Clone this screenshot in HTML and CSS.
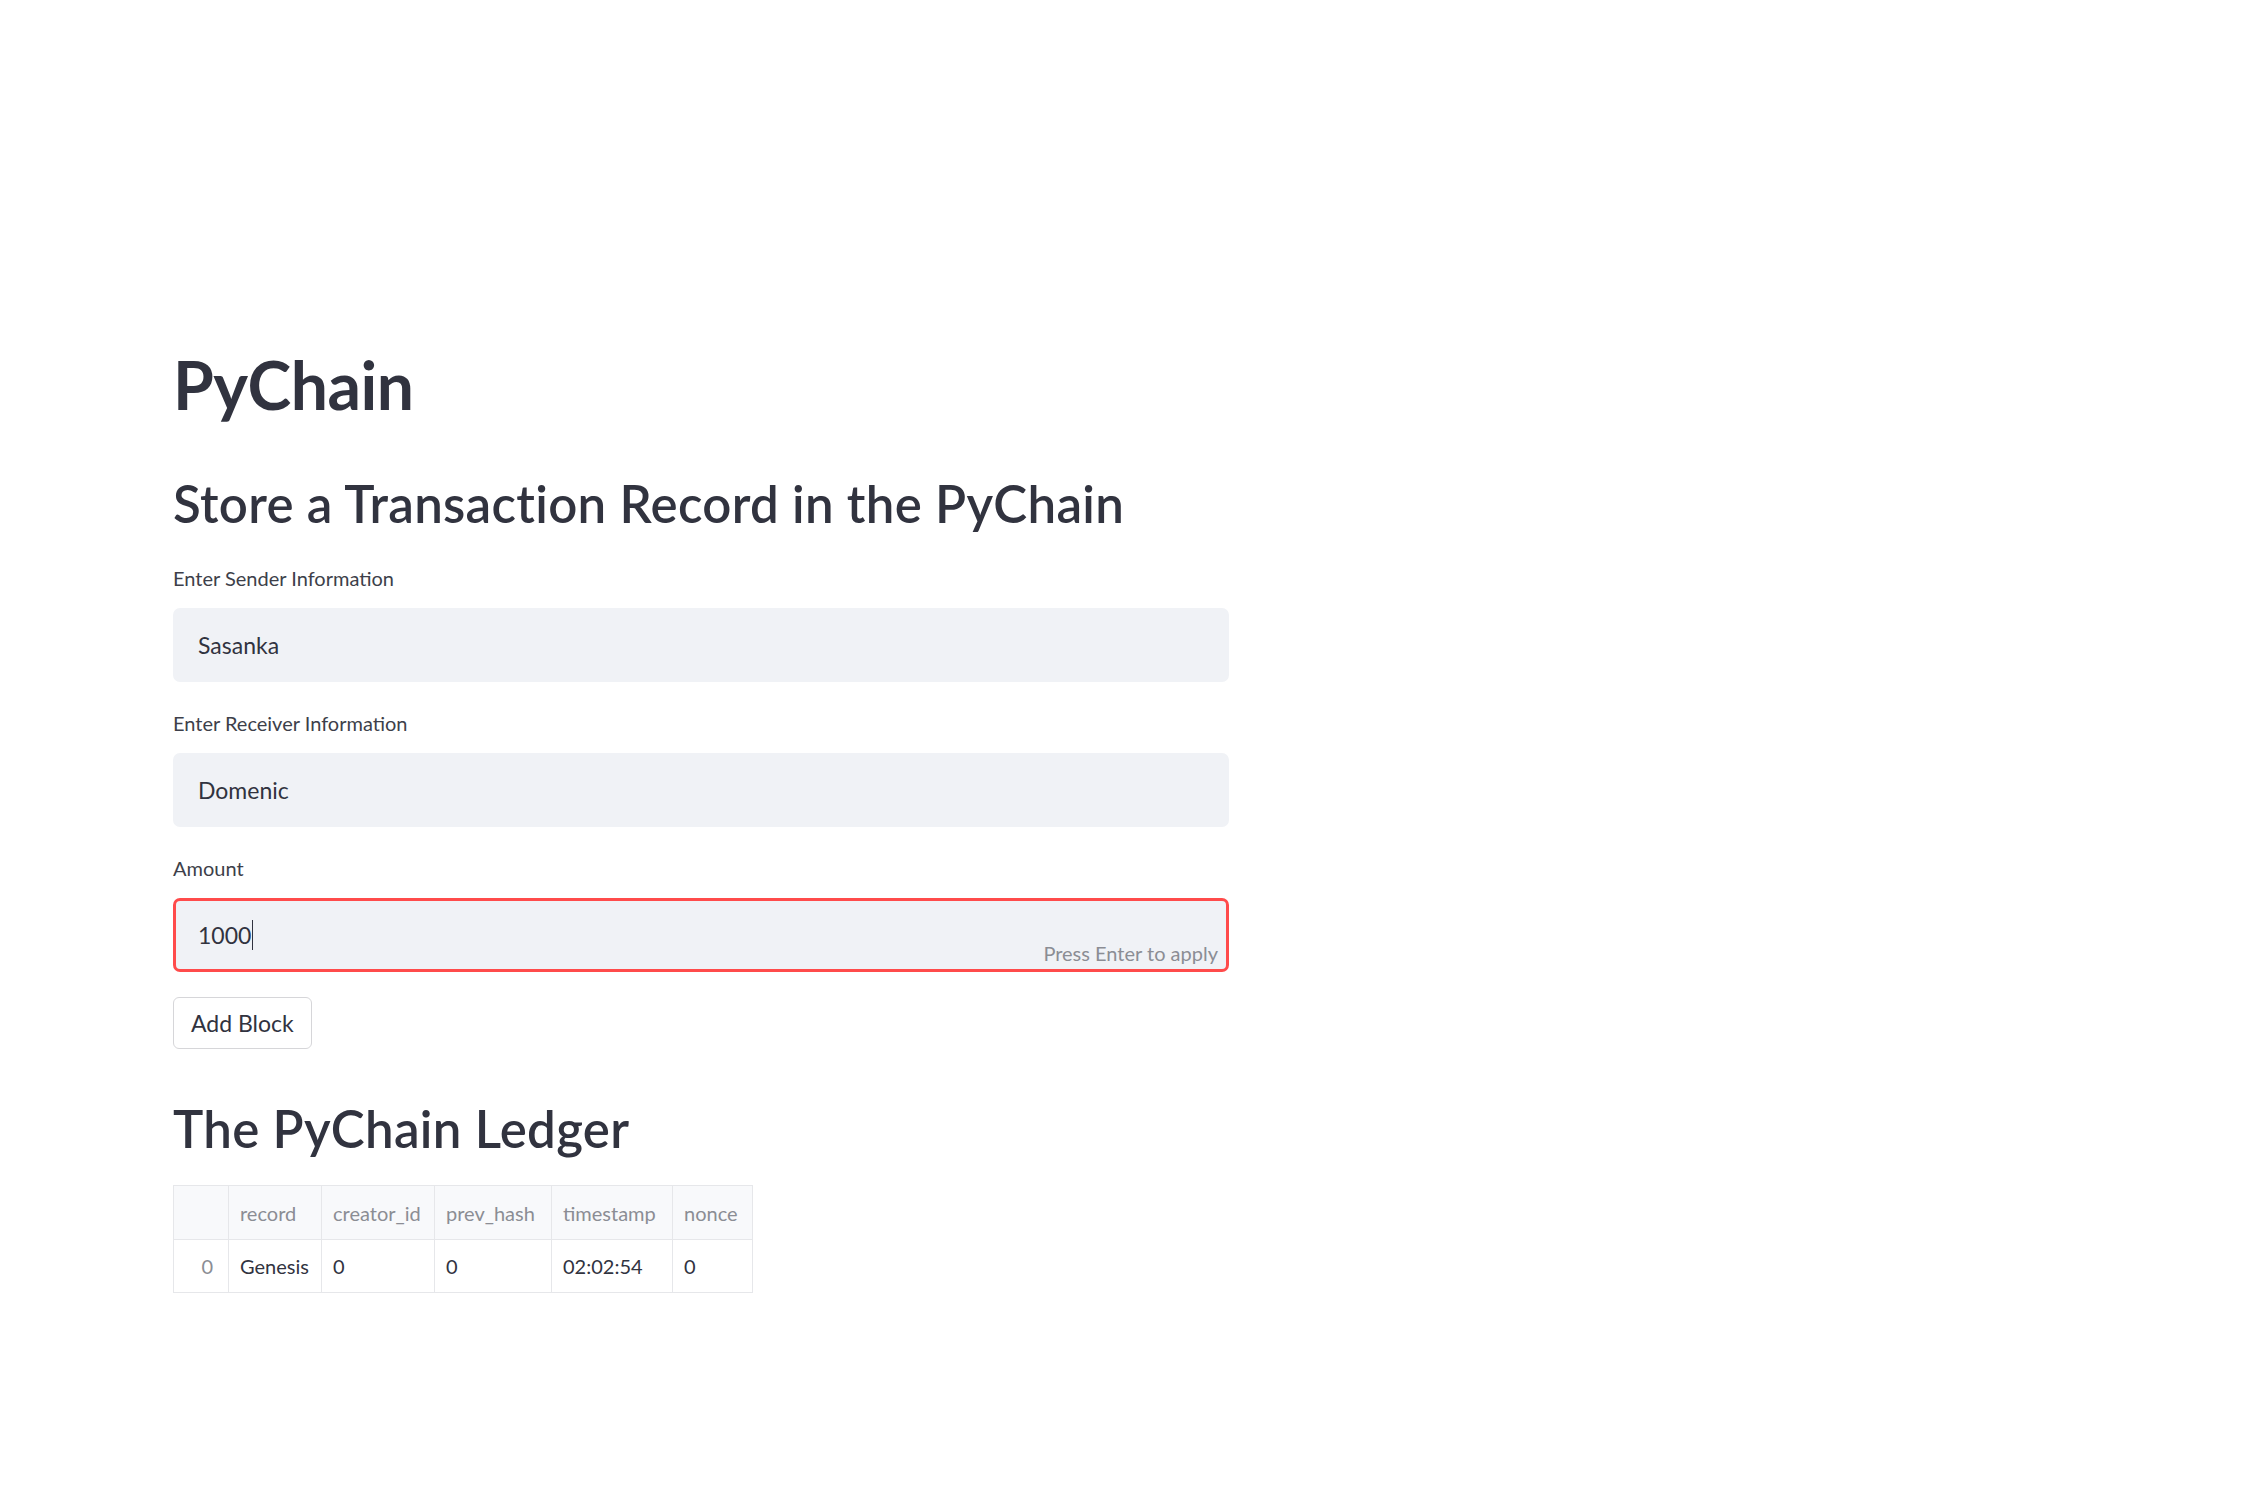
FILE: index.html
```html
<!DOCTYPE html>
<html lang="en">
<head>
<meta charset="utf-8">
<title>PyChain</title>
<link rel="stylesheet" href="styles.css">
</head>
<body>
<main class="app">
  <section class="block">
    <h1 class="title">PyChain</h1>
    <h2 class="heading heading-store">Store a Transaction Record in the PyChain</h2>

    <div class="field">
      <div class="field-label">Enter Sender Information</div>
      <div class="input"><span class="input-value">Sasanka</span></div>
    </div>

    <div class="field">
      <div class="field-label">Enter Receiver Information</div>
      <div class="input"><span class="input-value">Domenic</span></div>
    </div>

    <div class="field">
      <div class="field-label">Amount</div>
      <div class="input input-focused">
        <span class="input-value">1000</span><span class="caret"></span>
        <span class="input-hint">Press Enter to apply</span>
      </div>
    </div>

    <button class="btn" type="button">Add Block</button>

    <h2 class="heading heading-ledger">The PyChain Ledger</h2>

    <table class="ledger">
      <colgroup>
        <col class="col-index">
        <col class="col-record">
        <col class="col-creator">
        <col class="col-prev">
        <col class="col-time">
        <col class="col-nonce">
      </colgroup>
      <thead>
        <tr>
          <th></th>
          <th>record</th>
          <th>creator_id</th>
          <th>prev_hash</th>
          <th>timestamp</th>
          <th>nonce</th>
        </tr>
      </thead>
      <tbody>
        <tr>
          <th class="row-index">0</th>
          <td>Genesis</td>
          <td>0</td>
          <td>0</td>
          <td>02:02:54</td>
          <td>0</td>
        </tr>
      </tbody>
    </table>
  </section>
</main>
</body>
</html>
```

FILE: styles.css
```css
html, body {
  margin: 0;
  padding: 0;
  background: #ffffff;
}

body {
  font-family: Lato, "Noto Sans", "Liberation Sans", sans-serif;
  color: #31333f;
}

.app {
  padding: 345px 0 0 173px;
}

.block {
  width: 1056px;
  display: flex;
  flex-direction: column;
  align-items: flex-start;
}

.title {
  margin: 0;
  font-size: 66px;
  line-height: 79px;
  font-weight: 700;
  letter-spacing: -0.5px;
  color: #31333f;
}

.heading {
  margin: 0;
  font-size: 51px;
  line-height: 61px;
  font-weight: 600;
  letter-spacing: 0.3px;
  color: #31333f;
}

.heading-store {
  margin-top: 49px;
}

.heading-ledger {
  margin-top: 49px;
}

.field {
  width: 100%;
  margin-top: 29px;
}

.heading-store + .field {
  margin-top: 32px;
}

.field-label {
  font-size: 20px;
  line-height: 25px;
  margin-bottom: 17px;
  color: #3d3f4a;
}

.input {
  position: relative;
  box-sizing: border-box;
  width: 100%;
  height: 74px;
  display: flex;
  align-items: center;
  padding-left: 23px;
  background: #f0f2f6;
  border: 2px solid #f0f2f6;
  border-radius: 7px;
}

.input-value {
  font-size: 23px;
  line-height: 28px;
  color: #31333f;
}

.input-focused {
  border: 3px solid #ff4b4b;
  padding-left: 22px;
}

.caret {
  display: inline-block;
  width: 1px;
  height: 30px;
  background: #31333f;
  margin-left: 1px;
}

.input-hint {
  position: absolute;
  right: 8px;
  bottom: 3px;
  font-size: 20px;
  line-height: 25px;
  color: #8b8d94;
}

.btn {
  margin-top: 25px;
  height: 52px;
  box-sizing: border-box;
  padding: 0 17px;
  background: #ffffff;
  border: 1px solid #d6d6d9;
  border-radius: 6px;
  font-family: inherit;
  font-size: 23px;
  color: #31333f;
}

.ledger {
  margin-top: 26px;
  border-collapse: collapse;
  table-layout: fixed;
  width: 579px;
  font-size: 20px;
}

.ledger th,
.ledger td {
  border: 1px solid #e6e7ea;
  padding: 0 11px;
  text-align: left;
  font-weight: 400;
  white-space: nowrap;
  overflow: hidden;
}

.ledger thead th {
  height: 53px;
  background: #f8f9fb;
  color: #8b8d94;
}

.ledger tbody td,
.ledger tbody th {
  height: 52px;
  color: #31333f;
}

.ledger .row-index {
  text-align: right;
  color: #8b8d94;
  padding-right: 15px;
}

.col-index { width: 55px; }
.col-record { width: 93px; }
.col-creator { width: 113px; }
.col-prev { width: 117px; }
.col-time { width: 121px; }
.col-nonce { width: 80px; }
```
